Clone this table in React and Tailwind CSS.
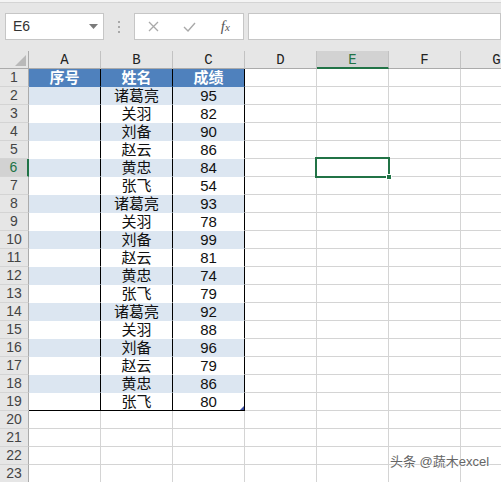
import React from 'react';

const COLS = ['A', 'B', 'C', 'D', 'E', 'F', 'G'];

const DATA = [
  ['诸葛亮', 95], ['关羽', 82], ['刘备', 90], ['赵云', 86], ['黄忠', 84], ['张飞', 54],
  ['诸葛亮', 93], ['关羽', 78], ['刘备', 99], ['赵云', 81], ['黄忠', 74], ['张飞', 79],
  ['诸葛亮', 92], ['关羽', 88], ['刘备', 96], ['赵云', 79], ['黄忠', 86], ['张飞', 80],
];

const cjk = "font-['Liberation_Sans','Noto_Sans_CJK_SC',sans-serif]";
const mono = "font-['Liberation_Mono',monospace]";
const sans = "font-['Liberation_Sans',sans-serif]";

function Toolbar() {
  return (
    <div>
      <div className="h-[2px] bg-[#f4f4f4]" />
      <div className="h-[1px] bg-[#d4d4d4]" />
      <div className="h-[48px] bg-[#e6e6e6] flex items-start pt-[10px]">
        <div className="ml-[5px] w-[101px] h-[27px] bg-white border border-[#c6c6c6] flex items-center pl-[7px] pr-[5px]">
          <span className={sans + ' text-[14px] text-[#333] flex-1'}>E6</span>
          <svg width="9" height="5" viewBox="0 0 9 5"><path d="M0 0h9L4.5 5z" fill="#7a7a7a" /></svg>
        </div>
        <div className="w-[31px] h-[27px] flex flex-col items-center justify-center gap-[3px]">
          <span className="w-[2px] h-[2px] bg-[#a8a8a8]" />
          <span className="w-[2px] h-[2px] bg-[#a8a8a8]" />
          <span className="w-[2px] h-[2px] bg-[#a8a8a8]" />
        </div>
        <div className="w-[110px] h-[27px] bg-white border border-[#c6c6c6] flex items-center">
          <div className="w-[37px] flex justify-center">
            <svg width="11" height="11" viewBox="0 0 11 11"><path d="M1 1l9 9M10 1l-9 9" stroke="#a9a9a9" strokeWidth="1.3" /></svg>
          </div>
          <div className="w-[36px] flex justify-center">
            <svg width="13" height="10" viewBox="0 0 13 10"><path d="M1 5l4 4 7-8" stroke="#a9a9a9" strokeWidth="1.4" fill="none" /></svg>
          </div>
          <div className="w-[35px] flex justify-center">
            <span className="italic text-[15px] text-[#555] font-['Liberation_Serif',serif] leading-none">
              f<span className="text-[11px]">x</span>
            </span>
          </div>
        </div>
        <div className="ml-[4px] w-[260px] h-[27px] bg-white border border-[#c6c6c6]" />
      </div>
    </div>
  );
}

function HeaderRow() {
  return (
    <div className="flex h-[18px] bg-[#e6e6e6]">
      <div className="w-[29px] shrink-0 h-full border-r border-b border-[#ababab] flex items-end justify-end pr-[2px] pb-[2px]">
        <svg width="11" height="11" viewBox="0 0 11 11"><path d="M11 0v11H0z" fill="#b9b9b9" /></svg>
      </div>
      {COLS.map((c) => {
        const sel = c === 'E';
        return (
          <div
            key={c}
            className={
              mono +
              ' w-[72px] shrink-0 h-full border-r border-r-[#c2c2c2] flex items-center justify-center pt-[2px] text-[14px] ' +
              (sel ? 'bg-[#d2d2d2] text-[#217346] border-b-2 border-b-[#217346]' : 'text-[#222] border-b border-b-[#ababab]')
            }
          >
            {c}
          </div>
        );
      })}
    </div>
  );
}

function Row({ n }) {
  const inTable = n <= 19;
  const isHead = n === 1;
  const blue = inTable && !isHead && n % 2 === 0;
  const item = n >= 2 && n <= 19 ? DATA[n - 2] : null;
  const sel = n === 6;

  return (
    <div className="flex h-[18px]">
      <div
        className={
          sans +
          ' w-[29px] shrink-0 h-full border-b border-b-[#d4d4d4] flex items-center justify-center text-[14px] ' +
          (sel ? 'bg-[#d2d2d2] text-[#217346] border-r-2 border-r-[#217346]' : 'bg-[#e6e6e6] text-[#444] border-r border-r-[#ababab]')
        }
      >
        {n}
      </div>
      {COLS.map((c, i) => {
        let cls = 'relative w-[72px] shrink-0 h-full flex items-center justify-center leading-none ';
        let content = null;
        if (inTable && i < 3) {
          cls += 'border-r border-r-black ';
          cls += n === 19 ? 'border-b border-b-black ' : 'border-b border-b-transparent ';
          if (isHead) cls += 'bg-[#4f81bd] text-white font-bold ';
          else if (blue) cls += 'bg-[#dce6f1] text-[#111] ';
          else cls += 'bg-white text-[#111] ';
          if (isHead) {
            content = <span className={cjk + ' text-[15px]'}>{['序号', '姓名', '成绩'][i]}</span>;
          } else if (i === 1) {
            content = <span className={cjk + ' text-[15px]'}>{item[0]}</span>;
          } else if (i === 2) {
            content = <span className={sans + ' text-[15px]'}>{item[1]}</span>;
          }
        } else {
          cls += 'border-r border-r-[#d4d4d4] border-b border-b-[#d4d4d4] bg-white ';
        }
        return (
          <div key={c} className={cls}>
            {content}
            {n === 19 && i === 2 && (
              <svg className="absolute right-0 bottom-0" width="4" height="4" viewBox="0 0 4 4">
                <path d="M4 0v4H0z" fill="#3b4da3" />
              </svg>
            )}
          </div>
        );
      })}
    </div>
  );
}

export default function App() {
  const rows = Array.from({ length: 23 }, (_, i) => i + 1);
  return (
    <div className="relative w-[501px] h-[482px] overflow-hidden bg-white">
      <Toolbar />
      <HeaderRow />
      {rows.map((n) => (
        <Row key={n} n={n} />
      ))}

      <div className="absolute left-[315px] top-[157px] w-[75px] h-[21px] border-2 border-[#217346]">
        <div className="absolute -right-[4px] -bottom-[4px] w-[6px] h-[6px] bg-[#217346] border border-white" />
      </div>

      <div className="absolute left-[390px] top-[452px] text-[13px] text-[#666] font-['Liberation_Sans','Noto_Sans_CJK_SC',sans-serif] [text-shadow:0_0_2px_#fff,0_0_2px_#fff]">
        头条 @蔬木excel
      </div>
    </div>
  );
}
